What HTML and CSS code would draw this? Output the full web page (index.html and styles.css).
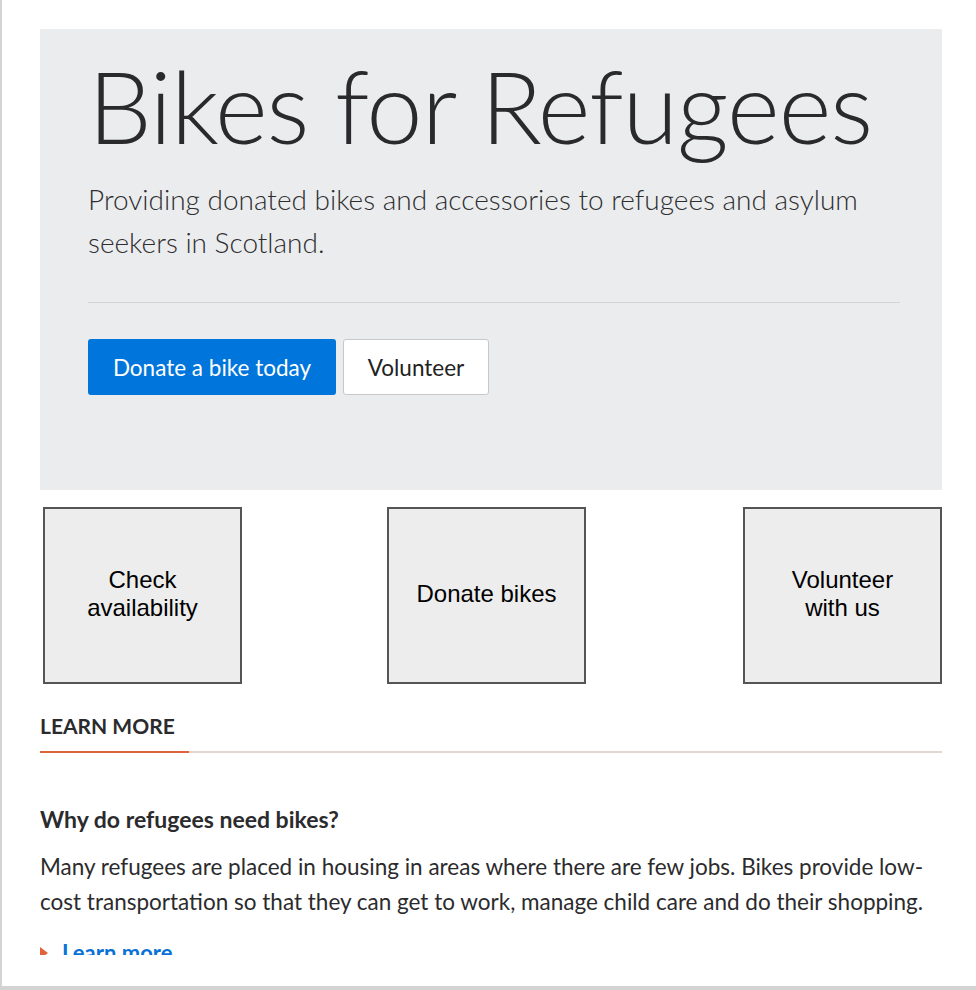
FILE: index.html
```html
<!DOCTYPE html>
<html lang="en">
<head>
<meta charset="utf-8">
<title>Bikes for Refugees</title>
<link rel="stylesheet" href="styles.css">
</head>
<body>
<div class="frame">
  <div class="viewport">
    <section class="hero">
      <h1 class="hero-title">Bikes for Refugees</h1>
      <p class="hero-lead">Providing donated bikes and accessories to refugees and asylum seekers in Scotland.</p>
      <hr class="hero-rule">
      <div class="hero-actions">
        <a class="btn btn-primary" href="#">Donate a bike today</a>
        <a class="btn btn-secondary" href="#">Volunteer</a>
      </div>
    </section>
    <div class="tiles">
      <div class="tile tile-1">Check availability</div>
      <div class="tile tile-2">Donate bikes</div>
      <div class="tile tile-3">Volunteer with us</div>
    </div>
    <div class="tabs">
      <span class="tab-active">LEARN MORE</span>
    </div>
    <article class="info">
      <h2 class="info-title">Why do refugees need bikes?</h2>
      <p class="info-text">Many refugees are placed in housing in areas where there are few jobs. Bikes provide low-cost transportation so that they can get to work, manage child care and do their shopping.</p>
      <a class="info-link" href="#"><span class="arrow"></span>Learn more</a>
    </article>
  </div>
</div>
</body>
</html>
```
FILE: styles.css
```css
* { box-sizing: border-box; }
html, body { margin: 0; padding: 0; background: #fff; }
body { font-family: "Lato", "Open Sans", sans-serif; color: #2b2b2d; }

.frame {
  width: 976px;
  height: 990px;
  border-left: 2px solid #d3d3d3;
  border-bottom: 4px solid #d3d3d3;
  padding-bottom: 31px;
}
.viewport {
  height: 955px;
  overflow: hidden;
  padding: 29px 34px 0 38px;
}

.hero {
  background: #ebecee;
  height: 461px;
  padding: 6px 42px 0 48px;
}
.hero-title {
  margin: 0;
  font-weight: 300;
  font-size: 101px;
  line-height: 140px;
  letter-spacing: -1px;
  color: #2a2a2c;
}
.hero-lead {
  margin: 3px 0 0;
  font-weight: 300;
  font-size: 28px;
  line-height: 43px;
  color: #2e2e30;
}
.hero-rule {
  border: 0;
  border-top: 1px solid #d4d5d7;
  margin: 38px 0 0;
}
.hero-actions {
  display: flex;
  gap: 7px;
  margin-top: 36px;
}
.btn {
  display: flex;
  align-items: center;
  justify-content: center;
  height: 56px;
  border-radius: 3px;
  font-size: 22.5px;
  text-decoration: none;
}
.btn-primary {
  width: 248px;
  background: #0075db;
  color: #fff;
}
.btn-secondary {
  width: 146px;
  background: #fff;
  color: #222;
  border: 1px solid #c8c8c8;
}

.tiles {
  display: flex;
  margin-top: 17px;
}
.tile {
  width: 199px;
  height: 177px;
  border: 2px solid #555;
  background: #ededed;
  display: flex;
  align-items: center;
  justify-content: center;
  text-align: center;
  font-family: "Liberation Sans", Arial, sans-serif;
  font-size: 24px;
  line-height: 28px;
  color: #000;
  padding: 0 24px 4px;
}
.tile-1 { margin-left: 3px; }
.tile-2 { margin-left: 145px; }
.tile-3 { margin-left: 157px; }

.tabs {
  margin-top: 28px;
  border-bottom: 2px solid #e2d6ce;
  width: 902px;
}
.tab-active {
  display: inline-block;
  width: 149px;
  font-weight: 700;
  font-size: 21px;
  line-height: 28px;
  padding-bottom: 11px;
  border-bottom: 2px solid #e0643a;
  margin-bottom: -2px;
  color: #2b2b2d;
}

.info { margin-top: 52px; width: 902px; }
.info-title {
  margin: 0;
  font-size: 23px;
  font-weight: 700;
  line-height: 28px;
}
.info-text {
  margin: 16px 0 0;
  font-size: 22.5px;
  line-height: 35px;
  color: #2b2b2d;
}
.info-link {
  display: flex;
  align-items: center;
  gap: 14px;
  margin-top: 20px;
  color: #0a72d6;
  font-weight: 700;
  font-size: 22px;
  line-height: 28px;
  text-decoration: none;
}
.arrow {
  width: 0;
  height: 0;
  border-top: 6px solid transparent;
  border-bottom: 6px solid transparent;
  border-left: 8px solid #e0643a;
}
```
